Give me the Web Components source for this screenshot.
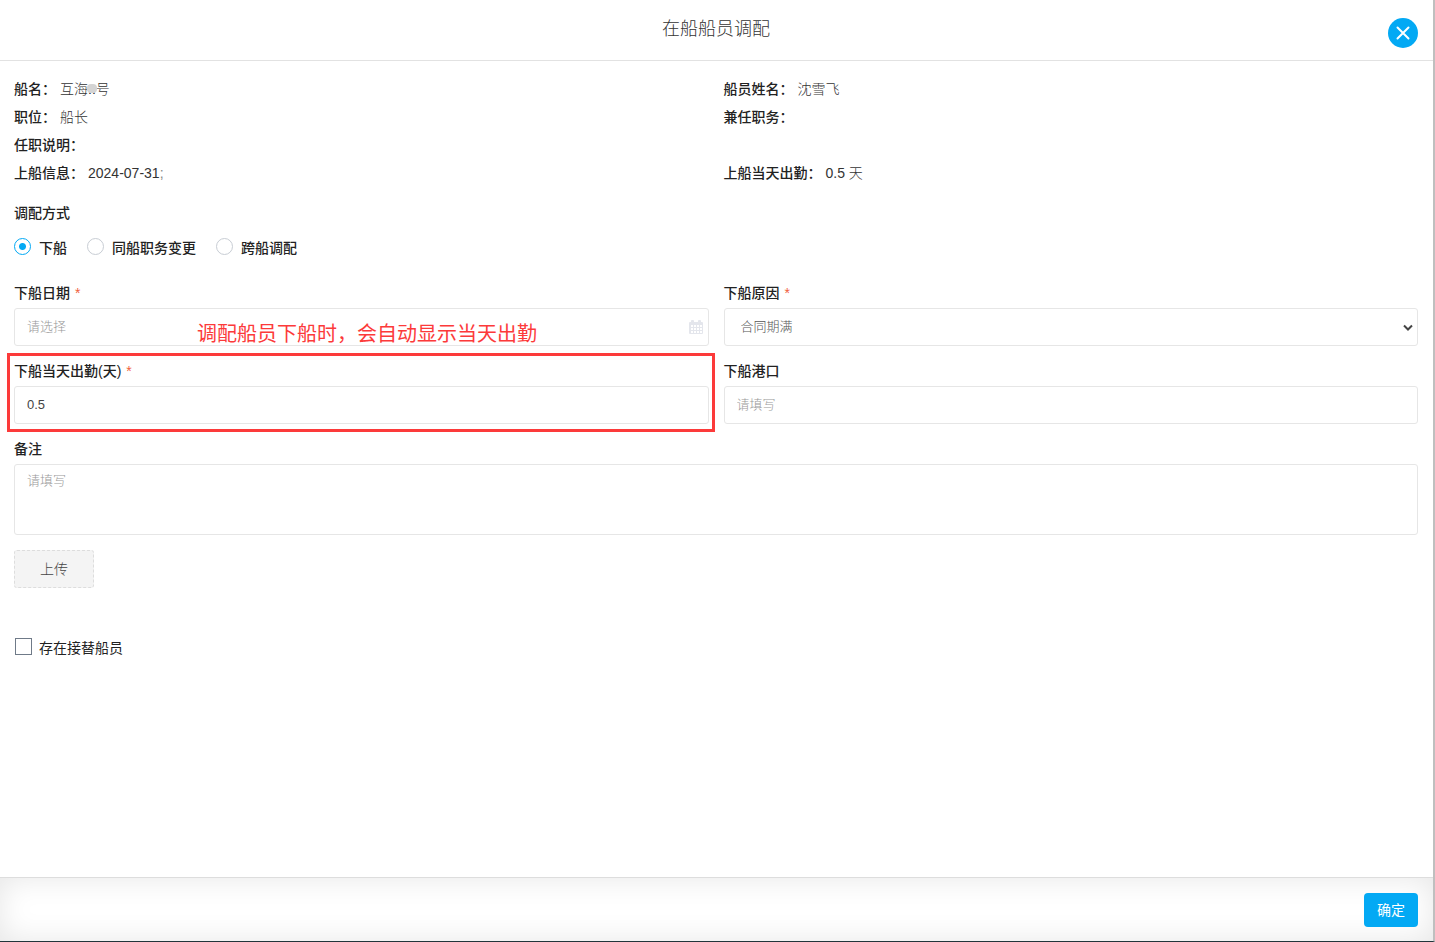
<!DOCTYPE html>
<html lang="zh-CN">
<head>
<meta charset="utf-8">
<meta name="viewport" content="width=device-width, initial-scale=1">
<title>在船船员调配</title>
<style>
html, body { margin: 0; height: 100%; }
body { font: 14px/20px "Liberation Sans", "Noto Sans CJK SC", sans-serif; color: #333; background: #fff; }
</style>
</head>
<body>
<crew-dialog>
  <span slot="title">在船船员调配</span>
  <info-grid>
    <info-item label="船名：">互海<masked-text>..</masked-text>号</info-item>
    <info-item label="船员姓名：">沈雪飞</info-item>
    <info-item label="职位：">船长</info-item>
    <info-item label="兼任职务："></info-item>
    <info-item label="任职说明：" wide></info-item>
    <info-item label="上船信息：">2024-07-31<soft-mark>;</soft-mark></info-item>
    <info-item label="上船当天出勤：">0.5 天</info-item>
  </info-grid>
  <mode-picker></mode-picker>
  <form-grid>
    <form-field label="下船日期" kind="date" placeholder="请选择" required></form-field>
    <form-field label="下船原因" kind="select" value="合同期满" required></form-field>
    <callout-box note="调配船员下船时，会自动显示当天出勤">
      <form-field label="下船当天出勤(天)" value="0.5" required></form-field>
    </callout-box>
    <form-field label="下船港口" placeholder="请填写"></form-field>
    <form-field label="备注" kind="textarea" placeholder="请填写" wide></form-field>
  </form-grid>
  <upload-button>上传</upload-button>
  <check-option>存在接替船员</check-option>
  <confirm-button slot="footer">确定</confirm-button>
</crew-dialog>
<script>
class Base extends HTMLElement {
  connectedCallback() {
    if (this.shadowRoot) return;
    this.attachShadow({ mode: "open" }).innerHTML =
      "<style>*{box-sizing:border-box}:host{box-sizing:border-box}" + this.css() + "</style>" + this.html();
  }
  attr(name) { return this.getAttribute(name) || ""; }
}
const define = (name, css, html) => customElements.define(name, class extends Base {
  css() { return css; }
  html() { return typeof html === "function" ? html(this) : html; }
});

define("crew-dialog", `
  :host { display: flex; flex-direction: column; min-height: 100vh; border-right: 2px solid #bfbfbf; border-bottom: 1px solid #22343a; background: #fff; }
  header { display: grid; grid-template-columns: 1fr auto 1fr; align-items: center; height: 61px; padding: 0 15px 0 14px; border-bottom: 1px solid #e2e2e2; }
  h1 { grid-column: 2; margin: 0; padding-bottom: 2px; font-size: 18px; line-height: 24px; font-weight: 300; }
  button { justify-self: end; display: grid; place-items: center; width: 30px; height: 30px; margin-top: 5px; padding: 0; border: 0; border-radius: 50%; background: #03a9f4; cursor: pointer; }
  main { flex: 1; padding: 14px 15px 14px 14px; }
  footer { display: flex; justify-content: flex-end; align-items: center; height: 64px; padding: 0 15px; border-top: 1px solid #ddd; box-shadow: inset 0 0 30px rgba(0,0,0,.1); }
`, `
  <header><h1><slot name="title"></slot></h1>
    <button type="button" aria-label="关闭"><svg width="14" height="14" viewBox="0 0 14 14"><path d="M1.500 1.500l11 11M12.500 1.500l-11 11" stroke="#fff" stroke-width="2" stroke-linecap="round"/></svg></button>
  </header>
  <main><slot></slot></main>
  <footer><slot name="footer"></slot></footer>`);

define("info-grid", `:host { display: grid; grid-template-columns: 1fr 1fr; column-gap: 15px; }`, `<slot></slot>`);

define("info-item", `
  :host { display: block; line-height: 28px; font-weight: 300; }
  :host([wide]) { grid-column: 1 / -1; }
  b { font-weight: 500; color: #222; margin-right: 4px; }
`, el => `<b>${el.attr("label")}</b><slot></slot>`);

define("masked-text", `
  :host { display: inline-block; position: relative; }
  i { position: absolute; left: -1px; top: 9px; width: 10px; height: 9px; border-radius: 4px; background: #d4d4d4; }
`, `<slot></slot><i></i>`);

define("soft-mark", `:host { display: inline; color: #888; }`, `<slot></slot>`);

define("mode-picker", `
  :host { display: block; }
  fieldset { margin: 16px 0 0; padding: 0; border: 0; color: #222; font-weight: 500; }
  legend { padding: 0; margin-bottom: 15px; }
  div { display: flex; gap: 20px; }
  label { display: flex; align-items: center; gap: 8px; }
  input { appearance: none; width: 17px; height: 17px; margin: 0 0 3px; border: 1px solid #c8cdd4; border-radius: 50%; background: #fff; }
  input:checked { border-color: #03a9f4; background: radial-gradient(circle, #03a9f4 0 3px, #fff 4px); }
`, `<fieldset><legend>调配方式</legend><div>
    <label><input type="radio" name="mode" checked>下船</label>
    <label><input type="radio" name="mode">同船职务变更</label>
    <label><input type="radio" name="mode">跨船调配</label>
  </div></fieldset>`);

define("form-grid", `:host { display: grid; grid-template-columns: 1fr 1fr; gap: 15px; margin-top: 25px; }`, `<slot></slot>`);

const calendar = `<svg width="14" height="14" viewBox="0 0 14 14"><path d="M1 2h1V1a1 1 0 0 1 1-1h1a1 1 0 0 1 1 1v1h4V1a1 1 0 0 1 1-1h1a1 1 0 0 1 1 1v1h1a1 1 0 0 1 1 1v10a1 1 0 0 1-1 1H1a1 1 0 0 1-1-1V3a1 1 0 0 1 1-1z" fill="#e4e6ec"/><path d="M2 5h2v2H2zM5 5h2v2H5zM8 5h2v2H8zM11 5h2v2h-2zM2 8h2v2H2zM5 8h2v2H5zM8 8h2v2H8zM11 8h2v2h-2zM2 11h2v2H2zM5 11h2v2H5zM8 11h2v2H8zM11 11h2v2h-2z" fill="#fff"/></svg>`;
define("form-field", `
  :host { display: block; }
  :host([wide]) { grid-column: 1 / -1; }
  label { display: block; margin-bottom: 5px; font-weight: 500; color: #222; }
  em { font-style: normal; font-weight: 400; color: #f0603c; margin-left: 5px; }
  .box { position: relative; display: flex; }
  input, select, textarea { width: 100%; height: 38px; margin: 0; padding: 0 12px; border: 1px solid #e6e6e6; border-radius: 3px; background: #fff; color: #444; font: inherit; font-size: 13px; font-weight: 300; outline: 0; }
  input { padding-bottom: 2px; }
  select { appearance: none; padding-left: 16px; color: #555; }
  textarea { display: block; height: 71px; padding: 6px 12px; resize: none; }
  ::placeholder { color: #999; opacity: 1; }
  svg { position: absolute; right: 6px; top: 12px; pointer-events: none; }
  .arrow { right: 5px; top: 16px; }
`, el => {
  const hint = `id="control" placeholder="${el.attr("placeholder")}"`;
  const kinds = {
    select: `<select id="control"><option>${el.attr("value")}</option></select><svg class="arrow" width="10" height="8" viewBox="0 0 10 8"><path d="M1 1.500l4 4 4-4" fill="none" stroke="#444" stroke-width="2"/></svg>`,
    textarea: `<textarea ${hint}></textarea>`,
    date: `<input type="text" ${hint}>${calendar}`
  };
  const control = kinds[el.attr("kind")] || `<input type="text" ${hint} value="${el.attr("value")}">`;
  return `<label for="control">${el.attr("label")}${el.hasAttribute("required") ? "<em>*</em>" : ""}</label><div class="box">${control}</div>`;
});

define("callout-box", `
  :host { display: block; position: relative; }
  .frame { position: absolute; inset: -8px -6px -8px -7px; border: 3px solid #fc3a3a; pointer-events: none; }
  .note { position: absolute; left: 183px; top: -42px; color: #fc3a3a; font-size: 20px; line-height: 30px; white-space: nowrap; pointer-events: none; }
`, el => `<slot></slot><div class="frame"></div><div class="note">${el.attr("note")}</div>`);

define("upload-button", `
  :host { display: block; margin-top: 15px; }
  button { width: 80px; height: 38px; padding: 0; border: 1px dashed #ddd; border-radius: 3px; background: #f4f4f4; color: #444; font: inherit; font-weight: 300; cursor: pointer; }
`, `<button type="button"><slot></slot></button>`);

define("check-option", `
  :host { display: block; margin-top: 50px; padding-left: 1px; }
  label { display: inline-flex; align-items: center; gap: 7px; color: #222; }
  input { appearance: none; width: 17px; height: 17px; margin: 0 0 3px; border: 1px solid #6f7a88; background: #fff; }
  input:checked { background: #03a9f4; }
`, `<label><input type="checkbox"><slot></slot></label>`);

define("confirm-button", `
  :host { display: block; }
  button { width: 54px; height: 34px; padding: 0; border: 0; border-radius: 4px; background: #03a9f4; color: #fff; font: inherit; cursor: pointer; }
`, `<button type="button"><slot></slot></button>`);
</script>
</body>
</html>
